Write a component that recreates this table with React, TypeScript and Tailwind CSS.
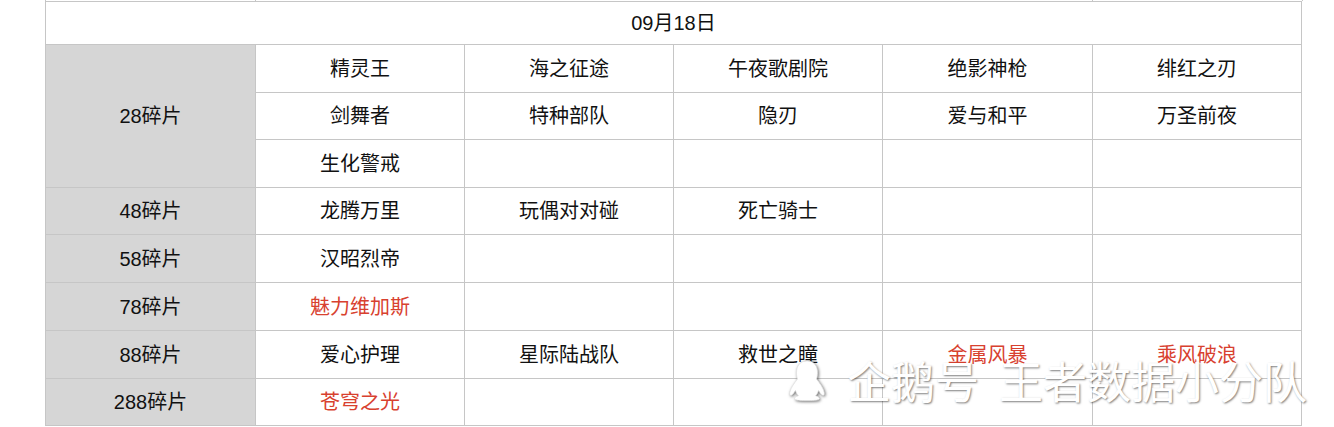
import React from "react";

type Cell = { text: string; red?: boolean };

const rows: { label?: string; cells: Cell[] }[] = [
  { label: "28碎片", cells: [{ text: "精灵王" }, { text: "海之征途" }, { text: "午夜歌剧院" }, { text: "绝影神枪" }, { text: "绯红之刃" }] },
  { cells: [{ text: "剑舞者" }, { text: "特种部队" }, { text: "隐刃" }, { text: "爱与和平" }, { text: "万圣前夜" }] },
  { cells: [{ text: "生化警戒" }, { text: "" }, { text: "" }, { text: "" }, { text: "" }] },
  { label: "48碎片", cells: [{ text: "龙腾万里" }, { text: "玩偶对对碰" }, { text: "死亡骑士" }, { text: "" }, { text: "" }] },
  { label: "58碎片", cells: [{ text: "汉昭烈帝" }, { text: "" }, { text: "" }, { text: "" }, { text: "" }] },
  { label: "78碎片", cells: [{ text: "魅力维加斯", red: true }, { text: "" }, { text: "" }, { text: "" }, { text: "" }] },
  { label: "88碎片", cells: [{ text: "爱心护理" }, { text: "星际陆战队" }, { text: "救世之瞳" }, { text: "金属风暴", red: true }, { text: "乘风破浪", red: true }] },
  { label: "288碎片", cells: [{ text: "苍穹之光", red: true }, { text: "" }, { text: "" }, { text: "" }, { text: "" }] },
];

function Penguin() {
  return (
    <svg width="42" height="46" viewBox="0 0 44 46" className="[filter:drop-shadow(1px_1px_1.5px_rgba(0,0,0,0.55))]">
      <path
        d="M22 3c-7 0-11 5-11 12 0 3 .4 5 1 7-3 4-7 9-8 14-.5 3 1 4 3 2 1-1 2-3 3-4 .5 2 1.5 4 3 5.5-2 .5-4 1.5-4 3 0 1.5 4 2 9 2h8c5 0 9-.5 9-2 0-1.5-2-2.5-4-3 1.5-1.5 2.5-3.5 3-5.5 1 1 2 3 3 4 2 2 3.5 1 3-2-1-5-5-10-8-14 .6-2 1-4 1-7 0-7-4-12-11-12z"
        fill="#ffffff"
        stroke="#e2e2e2"
        strokeWidth="0.8"
      />
    </svg>
  );
}

export default function App() {
  const font = "[font-family:'Liberation_Sans','Noto_Sans_CJK_SC',sans-serif]";
  const mark =
    "text-[44px] leading-none text-white [font-family:'Noto_Sans_CJK_SC',sans-serif] [text-shadow:1px_1px_2px_rgba(0,0,0,0.5)]";
  return (
    <div className={`relative w-[1334px] h-[427px] bg-white overflow-hidden ${font} text-[20px] text-[#111]`}>
      <div className="ml-[45px] w-[1257px] h-px grid grid-cols-[210px_837px_210px] border-l border-[#c6c6c6]">
        <div className="border-r border-[#c6c6c6]" />
        <div className="border-r border-[#c6c6c6]" />
        <div className="border-r border-[#c6c6c6]" />
      </div>
      <div className="ml-[45px] w-[1257px] grid grid-cols-[210px_209px_209px_209px_210px_209px] grid-rows-[43px_48px_47px_48px_47px_48px_48px_48px_47px] border-l border-t border-[#c6c6c6]">
        <div className="col-span-6 flex items-center justify-center border-r border-b border-[#c6c6c6]">09月18日</div>
        {rows.map((r, i) => (
          <React.Fragment key={i}>
            {r.label && (
              <div
                className={`flex items-center justify-center bg-[#d6d6d6] border-r border-b border-[#c6c6c6] ${r.label === "28碎片" ? "row-span-3" : ""}`}
              >
                {r.label}
              </div>
            )}
            {r.cells.map((c, j) => (
              <div
                key={j}
                className={`flex items-center justify-center border-r border-b border-[#c6c6c6] ${c.red ? "text-[#d8412f]" : ""}`}
              >
                {c.text}
              </div>
            ))}
          </React.Fragment>
        ))}
      </div>
      <div className="absolute left-[786px] top-[357px] flex items-center pointer-events-none">
        <Penguin />
        <span className={`${mark} ml-[19px]`}>企鹅号</span>
        <span className={`${mark} ml-[20px]`}>王者数据小分队</span>
      </div>
    </div>
  );
}
